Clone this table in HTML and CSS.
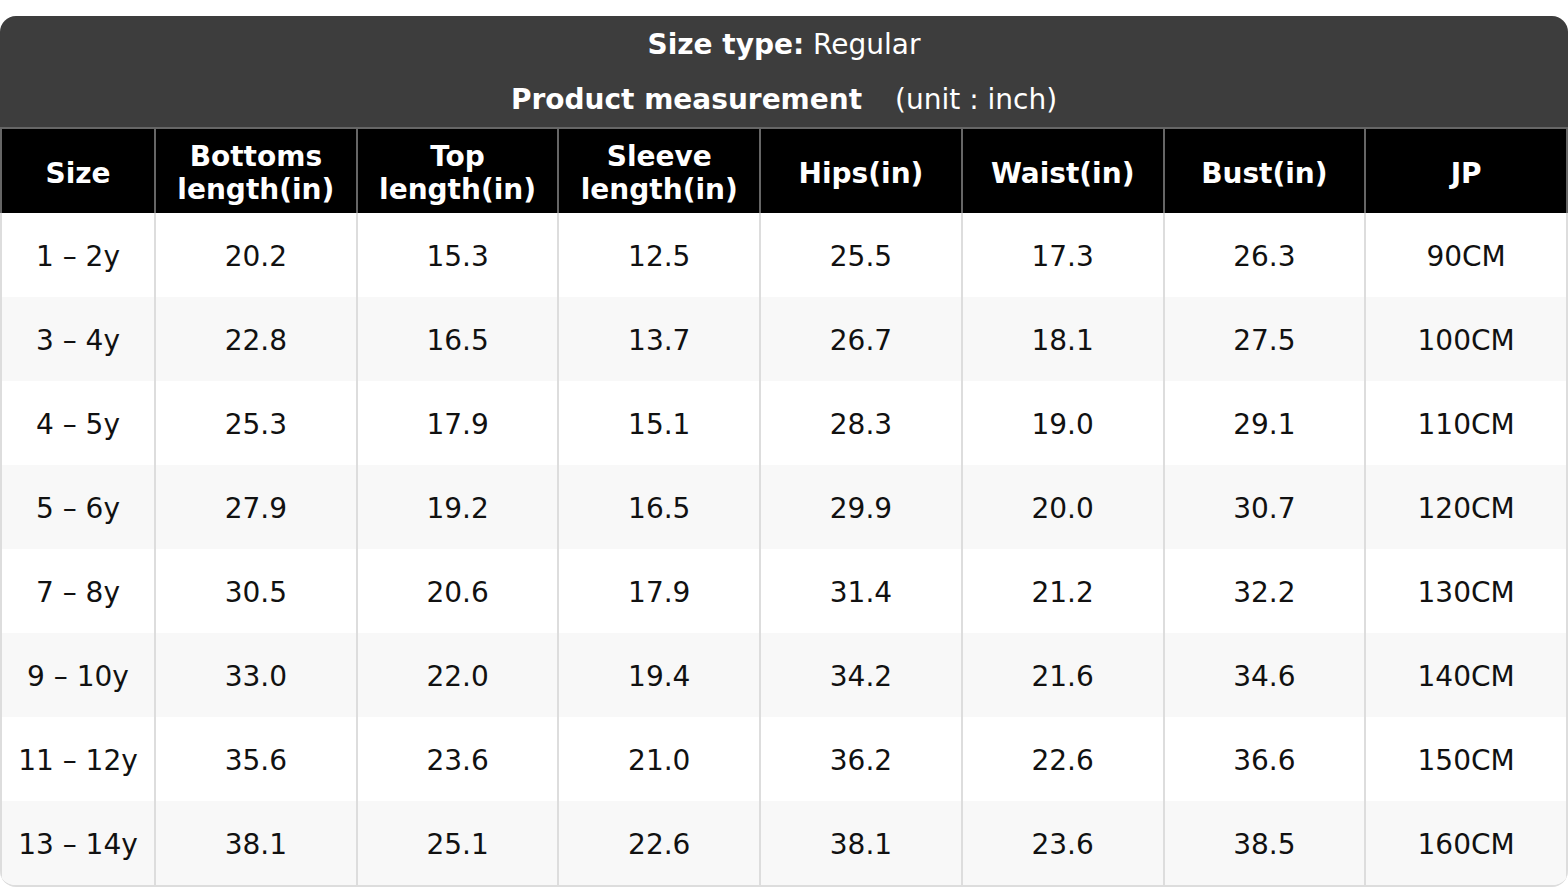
FILE: index.html
```html
<!DOCTYPE html>
<html>
<head>
<meta charset="utf-8">
<link rel="stylesheet" href="styles.css">
</head>
<body>
<div class="chart">
  <div class="title">
    <div class="title-line"><b>Size type:</b> Regular</div>
    <div class="title-line"><b>Product measurement</b><span class="unit">(unit : inch)</span></div>
  </div>
  <table class="grid">
    <colgroup>
      <col class="c-size">
      <col><col><col><col><col><col><col>
    </colgroup>
    <thead>
      <tr>
        <th>Size</th>
        <th>Bottoms<br>length(in)</th>
        <th>Top<br>length(in)</th>
        <th>Sleeve<br>length(in)</th>
        <th>Hips(in)</th>
        <th>Waist(in)</th>
        <th>Bust(in)</th>
        <th>JP</th>
      </tr>
    </thead>
    <tbody>
      <tr><td>1 – 2y</td><td>20.2</td><td>15.3</td><td>12.5</td><td>25.5</td><td>17.3</td><td>26.3</td><td>90CM</td></tr>
      <tr><td>3 – 4y</td><td>22.8</td><td>16.5</td><td>13.7</td><td>26.7</td><td>18.1</td><td>27.5</td><td>100CM</td></tr>
      <tr><td>4 – 5y</td><td>25.3</td><td>17.9</td><td>15.1</td><td>28.3</td><td>19.0</td><td>29.1</td><td>110CM</td></tr>
      <tr><td>5 – 6y</td><td>27.9</td><td>19.2</td><td>16.5</td><td>29.9</td><td>20.0</td><td>30.7</td><td>120CM</td></tr>
      <tr><td>7 – 8y</td><td>30.5</td><td>20.6</td><td>17.9</td><td>31.4</td><td>21.2</td><td>32.2</td><td>130CM</td></tr>
      <tr><td>9 – 10y</td><td>33.0</td><td>22.0</td><td>19.4</td><td>34.2</td><td>21.6</td><td>34.6</td><td>140CM</td></tr>
      <tr><td>11 – 12y</td><td>35.6</td><td>23.6</td><td>21.0</td><td>36.2</td><td>22.6</td><td>36.6</td><td>150CM</td></tr>
      <tr><td>13 – 14y</td><td>38.1</td><td>25.1</td><td>22.6</td><td>38.1</td><td>23.6</td><td>38.5</td><td>160CM</td></tr>
    </tbody>
  </table>
</div>
</body>
</html>
```

FILE: styles.css
```css
html, body {
  margin: 0;
  padding: 0;
  background: #ffffff;
}

body {
  padding-top: 16px;
  font-family: "DejaVu Sans", "Liberation Sans", sans-serif;
  font-size: 28px;
}

.chart {
  width: 1568px;
  border-radius: 16px;
  overflow: hidden;
  border-bottom: 2px solid #dddddd;
  box-sizing: border-box;
}

.title {
  background: #3d3d3d;
  color: #ffffff;
  text-align: center;
  padding-top: 1px;
  border-bottom: 2px solid #666666;
}

.title-line {
  height: 55px;
  line-height: 55px;
}

.title-line b {
  font-weight: bold;
}

.unit {
  margin-left: 33px;
}

.grid {
  width: 1568px;
  table-layout: fixed;
  border-collapse: separate;
  border-spacing: 0;
}

.c-size {
  width: 156px;
}

.grid th,
.grid td {
  padding: 3px 0 0 0;
  text-align: center;
  vertical-align: middle;
  box-sizing: border-box;
}

.grid th {
  height: 84px;
  background: #000000;
  color: #ffffff;
  font-weight: bold;
  line-height: 33px;
  padding-top: 4px;
  border-right: 2px solid #666666;
}

.grid th:first-child {
  border-left: 2px solid #666666;
}

.grid td {
  height: 84px;
  color: #111111;
  border-right: 2px solid #dddddd;
}

.grid td:first-child {
  border-left: 2px solid #dddddd;
}

.grid tbody tr:nth-child(even) td {
  background: #f8f8f8;
}
```
